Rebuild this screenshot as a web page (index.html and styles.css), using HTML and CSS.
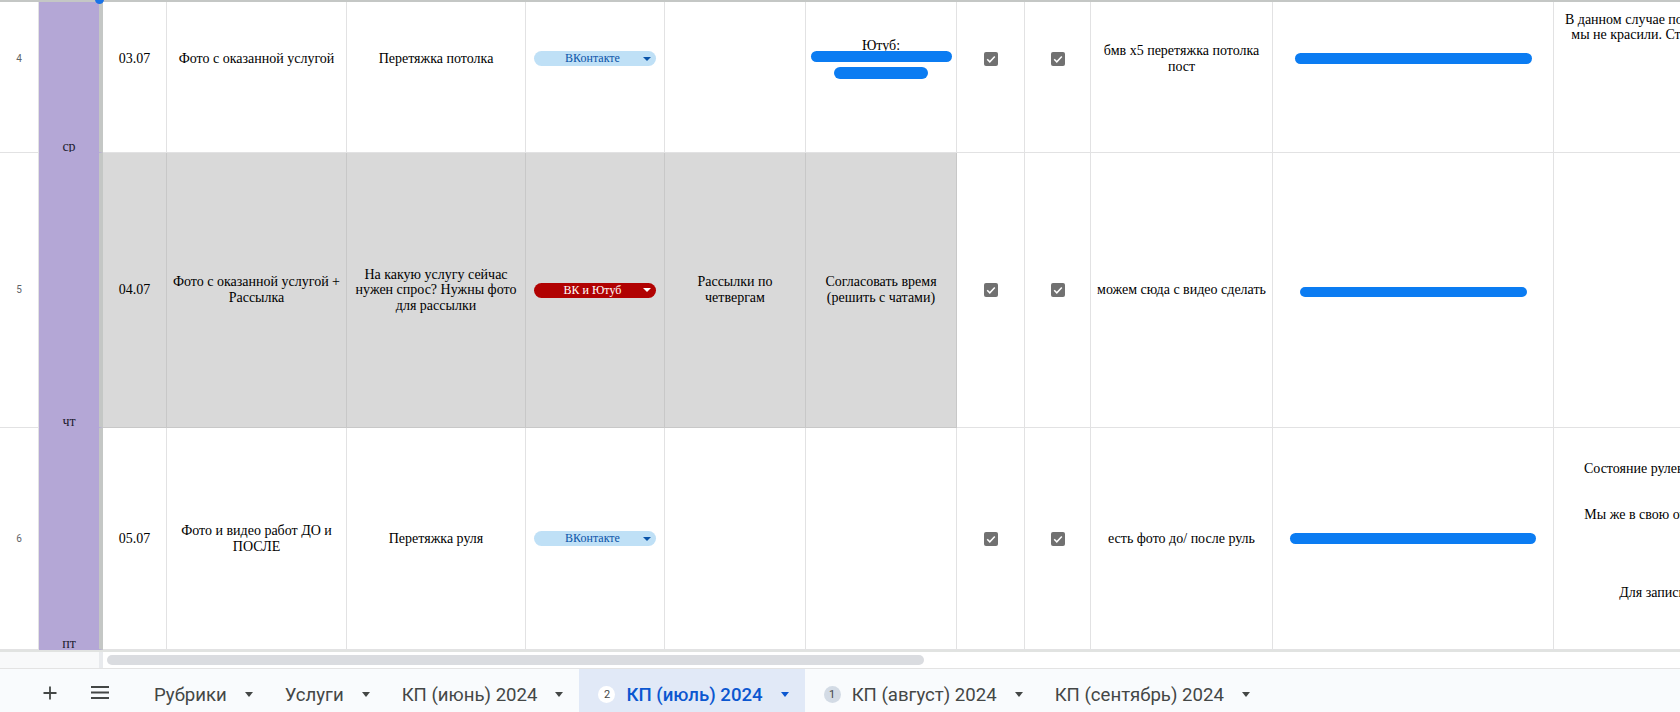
FILE: index.html
```html
<!DOCTYPE html>
<html lang="ru">
<head>
    <meta charset="UTF-8">
    <meta name="viewport" content="width=device-width, initial-scale=1.0">
    <title>КП (июль) 2024</title>
    <link rel="stylesheet" href="styles.css">
</head>
<body>

    <div class="sheet">
        <div class="frozen-edge"></div>
        <span class="select-handle"></span>

        <div class="viewport">
            <div class="grid">
                <!-- row 4 -->
                <div class="cell rownum">4</div>
                <div class="cell day">ср</div>
                <div class="cell">03.07</div>
                <div class="cell">Фото с оказанной услугой</div>
                <div class="cell">Перетяжка потолка</div>
                <div class="cell"><span class="chip chip-vk"><span class="chip-label">ВКонтакте</span><span class="chip-arrow"></span></span></div>
                <div class="cell"></div>
                <div class="cell">
                    <span>Ютуб:</span>
                    <span class="redact redact-yt1"></span>
                    <span class="redact redact-yt2"></span>
                </div>
                <div class="cell"><span class="check"><svg viewBox="0 0 14 14"><path d="M3.2 7.2l2.6 2.6 5-5.4"/></svg></span></div>
                <div class="cell"><span class="check"><svg viewBox="0 0 14 14"><path d="M3.2 7.2l2.6 2.6 5-5.4"/></svg></span></div>
                <div class="cell">бмв х5 перетяжка потолка<br>пост</div>
                <div class="cell"><span class="redact redact-l1"></span></div>
                <div class="cell note">В данном случае потолок и стойки салона,<br>мы не красили. Стоимость такой работы<br>&nbsp;<br>&nbsp;<br>&nbsp;<br>&nbsp;</div>

                <!-- row 5 -->
                <div class="cell rownum">5</div>
                <div class="cell day">чт</div>
                <div class="cell shaded">04.07</div>
                <div class="cell shaded">Фото с оказанной услугой +<br>Рассылка</div>
                <div class="cell shaded">На какую услугу сейчас<br>нужен спрос? Нужны фото<br>для рассылки</div>
                <div class="cell shaded"><span class="chip chip-both"><span class="chip-label">ВК и Ютуб</span><span class="chip-arrow"></span></span></div>
                <div class="cell shaded">Рассылки по<br>четвергам</div>
                <div class="cell shaded">Согласовать время<br>(решить с чатами)</div>
                <div class="cell"><span class="check"><svg viewBox="0 0 14 14"><path d="M3.2 7.2l2.6 2.6 5-5.4"/></svg></span></div>
                <div class="cell"><span class="check"><svg viewBox="0 0 14 14"><path d="M3.2 7.2l2.6 2.6 5-5.4"/></svg></span></div>
                <div class="cell">можем сюда с видео сделать</div>
                <div class="cell"><span class="redact redact-l2"></span></div>
                <div class="cell note"></div>

                <!-- row 6 -->
                <div class="cell rownum">6</div>
                <div class="cell day">пт</div>
                <div class="cell">05.07</div>
                <div class="cell">Фото и видео работ ДО и<br>ПОСЛЕ</div>
                <div class="cell">Перетяжка руля</div>
                <div class="cell"><span class="chip chip-vk"><span class="chip-label">ВКонтакте</span><span class="chip-arrow"></span></span></div>
                <div class="cell"></div>
                <div class="cell"></div>
                <div class="cell"><span class="check"><svg viewBox="0 0 14 14"><path d="M3.2 7.2l2.6 2.6 5-5.4"/></svg></span></div>
                <div class="cell"><span class="check"><svg viewBox="0 0 14 14"><path d="M3.2 7.2l2.6 2.6 5-5.4"/></svg></span></div>
                <div class="cell">есть фото до/ после руль</div>
                <div class="cell"><span class="redact redact-l3"></span></div>
                <div class="cell note">Состояние рулевого колеса не очень<br>&nbsp;<br>&nbsp;<br>Мы же в свою очередь обтянули его<br>&nbsp;<br>&nbsp;<br>&nbsp;<br>&nbsp;<br>Для записи пишите нам.<br>&nbsp;</div>
            </div>
        </div>

        <div class="hscroll">
            <div class="hscroll-corner"></div>
            <div class="hscroll-track"><div class="hscroll-thumb"></div></div>
        </div>

        <div class="tabs">
            <button class="tab-icon" title="Добавить лист">
                <svg width="14" height="14" viewBox="0 0 14 14"><path d="M7 0.5v13M0.5 7h13"/></svg>
            </button>
            <button class="tab-icon" title="Все листы">
                <svg width="18" height="13" viewBox="0 0 18 13"><path d="M0 1h18M0 6.5h18M0 12h18"/></svg>
            </button>
            <div class="tab">Рубрики<span class="tab-arrow"></span></div>
            <div class="tab">Услуги<span class="tab-arrow"></span></div>
            <div class="tab">КП (июнь) 2024<span class="tab-arrow"></span></div>
            <div class="tab active"><span class="badge">2</span>КП (июль) 2024<span class="tab-arrow"></span></div>
            <div class="tab"><span class="badge badge-muted">1</span>КП (август) 2024<span class="tab-arrow"></span></div>
            <div class="tab">КП (сентябрь) 2024<span class="tab-arrow"></span></div>
        </div>
    </div>

</body>
</html>
```

FILE: styles.css
```css
* {
    box-sizing: border-box;
}

body {
    margin: 0;
    width: 1680px;
    height: 712px;
    overflow: hidden;
    background-color: white;
    font-family: "Liberation Serif", serif;
}

.sheet {
    position: relative;
    display: flex;
    flex-direction: column;
    height: 712px;
}

.frozen-edge {
    flex: none;
    height: 2px;
    background-color: #c4c7c5;
}

.select-handle {
    position: absolute;
    top: -5px;
    left: 95px;
    width: 9px;
    height: 9px;
    border-radius: 50%;
    background-color: #1a73e8;
}

.viewport {
    flex: none;
    height: 648px;
    overflow: hidden;
}

/* sheet grid */
.grid {
    display: grid;
    grid-template-columns: 39px 64px 64px 180px 179px 139px 141px 151px 68px 66px 182px 281px 276px;
    grid-template-rows: 188px 275px 222px;
    width: max-content;
    margin-top: -37px;
}

.cell {
    display: flex;
    flex-direction: column;
    justify-content: center;
    align-items: center;
    text-align: center;
    padding: 0 3px;
    border-right: 1px solid #e2e2e3;
    border-bottom: 1px solid #e2e2e3;
    font-size: 14px;
    line-height: 15.6px;
    color: black;
    overflow: hidden;
    white-space: nowrap;
}

.rownum {
    font-family: Roboto, sans-serif;
    font-size: 10px;
    color: #5f6368;
}

.day {
    justify-content: flex-end;
    padding-bottom: 0;
    line-height: 11px;
    background-color: #b4a7d6;
    border-right: 4px solid #c4c7c5;
    border-bottom-color: #b4a7d6;
    color: #1c1b2e;
}

.shaded {
    background-color: #d9d9d9;
    border-right-color: #c8c8c8;
    border-bottom-color: #c8c8c8;
}

/* dropdown chips */
.chip {
    display: flex;
    align-items: center;
    width: 122px;
    height: 15px;
    padding: 0 5px 0 8px;
    border-radius: 8px;
    font-size: 12px;
    line-height: 15px;
}

.chip-label {
    flex: 1;
    text-align: center;
}

.chip-arrow {
    width: 0;
    height: 0;
    border-left: 4px solid transparent;
    border-right: 4px solid transparent;
    border-top: 4px solid currentColor;
}

.chip-vk {
    background-color: #bfe0f6;
    color: #0a53a8;
}

.chip-both {
    background-color: #b10202;
    color: white;
}

/* checkboxes */
.check {
    display: block;
    width: 14px;
    height: 14px;
    border-radius: 2px;
    background-color: #717171;
}

.check svg {
    display: block;
    width: 14px;
    height: 14px;
    fill: none;
    stroke: white;
    stroke-width: 1.5;
}

/* scribbled-over links */
.redact {
    display: block;
    height: 11px;
    border-radius: 6px;
    background-color: #0b7cf2;
}

.redact-yt1 {
    width: 141px;
    margin-top: -3px;
}

.redact-yt2 {
    width: 94px;
    height: 12px;
    margin-top: 5px;
}

.redact-l1 {
    width: 237px;
}

.redact-l2 {
    width: 227px;
    height: 10px;
    margin-top: 3px;
}

.redact-l3 {
    width: 246px;
}

.note {
    border-right: none;
}

/* horizontal scrollbar */
.hscroll {
    flex: none;
    display: flex;
    height: 18px;
    border-top: 2px solid #e1e3e1;
}

.hscroll-corner {
    width: 103px;
    background-color: #f8f9fa;
    border-right: 4px solid #e8eaed;
}

.hscroll-track {
    flex: 1;
    padding: 3px 0 3px 4px;
}

.hscroll-thumb {
    width: 817px;
    height: 10px;
    border-radius: 5px;
    background-color: #dadce0;
}

/* sheet tabs */
.tabs {
    flex: none;
    display: flex;
    align-items: stretch;
    height: 44px;
    padding-left: 30px;
    border-top: 1px solid #e3e3e3;
    background-color: #f9fbfd;
    font-family: Roboto, sans-serif;
    font-size: 18.6px;
    color: #444746;
}

.tab-icon {
    display: flex;
    justify-content: center;
    align-items: center;
    width: 40px;
    margin-right: 10px;
    padding: 4px 0 0;
    border: none;
    background: none;
}

.tab-icon svg {
    fill: none;
    stroke: #444746;
    stroke-width: 1.8;
}

.tab-icon + .tab-icon {
    margin-right: 18px;
}

.tab {
    display: flex;
    align-items: center;
    padding: 8px 16px 0;
    white-space: nowrap;
}

.tab-arrow {
    width: 0;
    height: 0;
    margin-left: 18px;
    border-left: 4px solid transparent;
    border-right: 4px solid transparent;
    border-top: 5px solid #444746;
}

.tab.active {
    background-color: #e1e9f7;
    color: #0b57d0;
    font-weight: 500;
}

.tab.active .tab-arrow {
    border-top-color: #0b57d0;
}

.badge {
    display: flex;
    justify-content: center;
    align-items: center;
    width: 17px;
    height: 17px;
    margin: 0 11px 0 3px;
    border-radius: 50%;
    background-color: white;
    color: #444746;
    font-size: 11px;
    font-weight: 400;
}

.badge-muted {
    background-color: #d3dbe5;
}
```
